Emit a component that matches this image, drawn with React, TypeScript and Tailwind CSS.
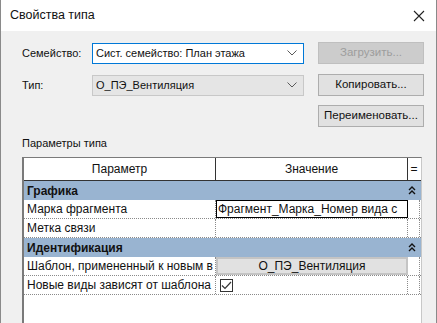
import React from "react";

const font = { fontFamily: '"Liberation Sans", Arial, sans-serif' };

function ComboArrow() {
  return (
    <svg width="10" height="6" viewBox="0 0 10 6" className="shrink-0">
      <polyline points="0.5,0.5 5,5 9.5,0.5" fill="none" stroke="#5a5a5a" strokeWidth="1" />
    </svg>
  );
}

function DoubleUp() {
  return (
    <svg width="8" height="9" viewBox="0 0 8 9">
      <polyline points="1,4 4,1 7,4" fill="none" stroke="#111" strokeWidth="1.4" />
      <polyline points="1,8 4,5 7,8" fill="none" stroke="#111" strokeWidth="1.4" />
    </svg>
  );
}

function Button({ children, disabled }: { children: React.ReactNode; disabled?: boolean }) {
  return (
    <div
      className={
        "w-[106px] h-[22px] flex items-center justify-center text-[11.5px] border whitespace-nowrap " +
        (disabled
          ? "bg-[#cccccc] border-[#bfbfbf] text-[#9d9d9d]"
          : "bg-[#e1e1e1] border-[#adadad] text-[#111]")
      }
    >
      {children}
    </div>
  );
}

export default function App() {
  return (
    <div
      style={font}
      className="w-[437px] h-[323px] overflow-hidden flex flex-col border-l border-r border-[#8a8a8a] bg-[#f0f0f0] text-[#111]"
    >
      {/* Title bar */}
      <div className="h-[31px] shrink-0 bg-white flex items-center justify-between pl-[9px] pr-[11px]">
        <span className="text-[12.5px]">Свойства типа</span>
        <svg width="12" height="12" viewBox="0 0 12 12">
          <path d="M1 1 L11 11 M11 1 L1 11" stroke="#222" strokeWidth="1.1" />
        </svg>
      </div>

      {/* Body */}
      <div className="flex-1 flex flex-col pl-[21px] pt-[11px]">
        <div className="flex items-center h-[22px]">
          <span className="w-[70px] text-[11px]">Семейство:</span>
          <div className="w-[212px] h-[21px] bg-white border border-[#0078d7] flex items-center justify-between pl-[3px] pr-[6px]">
            <span className="text-[11px]">Сист. семейство: План этажа</span>
            <ComboArrow />
          </div>
          <div className="ml-[14px]">
            <Button disabled>Загрузить...</Button>
          </div>
        </div>

        <div className="flex items-center h-[22px] mt-[10px]">
          <span className="w-[70px] text-[11px]">Тип:</span>
          <div className="w-[212px] h-[21px] bg-[#e5e5e5] border border-[#c8c8c8] flex items-center justify-between pl-[3px] pr-[6px]">
            <span className="text-[11px]">О_ПЭ_Вентиляция</span>
            <ComboArrow />
          </div>
          <div className="ml-[14px]">
            <Button>Копировать...</Button>
          </div>
        </div>

        <div className="flex h-[22px] mt-[9px] pl-[296px]">
          <Button>Переименовать...</Button>
        </div>

        <div className="text-[11px] mt-[8px] h-[16px] leading-[16px]">Параметры типа</div>

        {/* Table */}
        <div className="mt-[6px] w-[400px] flex-1 bg-white border-l-2 border-t border-r border-l-[#7a7a7a] border-t-[#7a7a7a] border-r-[#c8c8c8] flex flex-col text-[12px]">
          {/* header */}
          <div className="flex h-[23px] border-b border-[#333]">
            <div className="w-[192px] flex items-center justify-center border-r border-[#333]">Параметр</div>
            <div className="w-[192px] flex items-center justify-center border-r border-[#333]">Значение</div>
            <div className="w-[12px] flex items-center justify-center">=</div>
          </div>

          {/* group Графика */}
          <div className="flex h-[19px] bg-[#99b4d1] items-center justify-between pl-[3px] pr-[5px]">
            <span className="font-bold">Графика</span>
            <DoubleUp />
          </div>
          <div className="flex h-[19px] border-b border-dotted border-[#8a8a8a]">
            <div className="w-[192px] flex items-center pl-[3px] border-r border-dotted border-[#8a8a8a] whitespace-nowrap overflow-hidden">Марка фрагмента</div>
            <div className="w-[192px] flex items-center pl-[1px] border border-black whitespace-nowrap overflow-hidden">Фрагмент_Марка_Номер вида с</div>
            <div className="w-[12px] border-r border-dotted border-[#8a8a8a]"></div>
          </div>
          <div className="flex h-[19px] border-b border-dotted border-[#8a8a8a]">
            <div className="w-[192px] flex items-center pl-[3px] border-r border-dotted border-[#8a8a8a]">Метка связи</div>
            <div className="w-[192px] border-r border-dotted border-[#8a8a8a]"></div>
            <div className="w-[12px] border-r border-dotted border-[#8a8a8a]"></div>
          </div>

          {/* group Идентификация */}
          <div className="flex h-[19px] bg-[#99b4d1] items-center justify-between pl-[3px] pr-[5px]">
            <span className="font-bold">Идентификация</span>
            <DoubleUp />
          </div>
          <div className="flex h-[19px] border-b border-dotted border-[#8a8a8a]">
            <div className="w-[192px] flex items-center pl-[3px] border-r border-dotted border-[#8a8a8a] whitespace-nowrap overflow-hidden">Шаблон, примененный к новым в</div>
            <div className="w-[192px] flex items-center justify-center bg-[#e1e1e1] border-2 border-[#c4c4c4]">О_ПЭ_Вентиляция</div>
            <div className="w-[12px] border-r border-dotted border-[#8a8a8a]"></div>
          </div>
          <div className="flex h-[19px] border-b border-dotted border-[#8a8a8a]">
            <div className="w-[192px] flex items-center pl-[3px] border-r border-dotted border-[#8a8a8a] whitespace-nowrap overflow-hidden">Новые виды зависят от шаблона</div>
            <div className="w-[192px] flex items-center pl-[4px] border-r border-dotted border-[#8a8a8a]">
              <div className="w-[13px] h-[13px] border border-[#333] bg-white flex items-center justify-center">
                <svg width="11" height="9" viewBox="0 0 11 9">
                  <polyline points="1,4.5 4,7.5 10,1" fill="none" stroke="#333" strokeWidth="1.2" />
                </svg>
              </div>
            </div>
            <div className="w-[12px] border-r border-dotted border-[#8a8a8a]"></div>
          </div>
        </div>
      </div>
    </div>
  );
}
